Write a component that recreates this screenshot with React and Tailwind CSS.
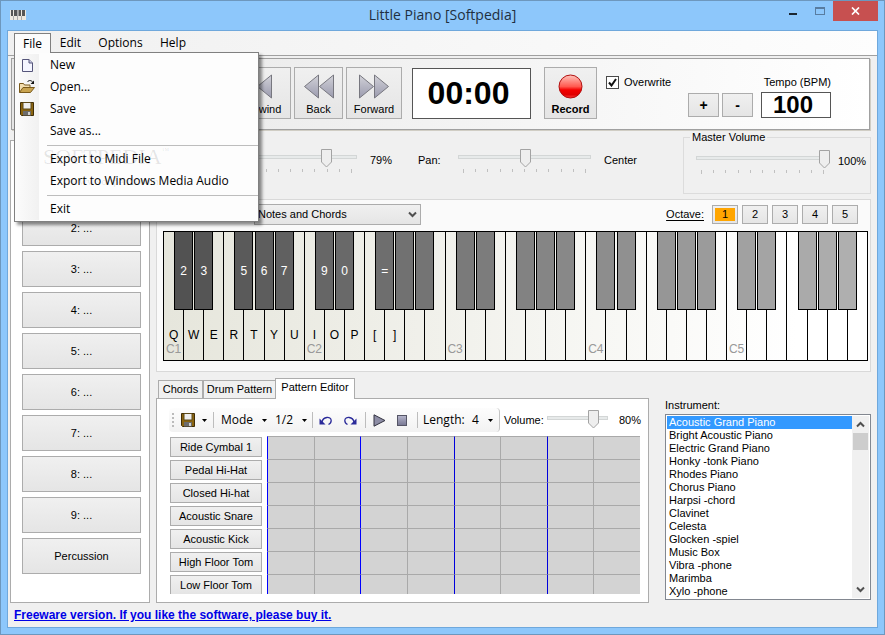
import { useState } from "react";

const instruments = [
  "Acoustic Grand Piano",
  "Bright Acoustic Piano",
  "Electric Grand Piano",
  "Honky -tonk Piano",
  "Rhodes Piano",
  "Chorus Piano",
  "Harpsi -chord",
  "Clavinet",
  "Celesta",
  "Glocken -spiel",
  "Music Box",
  "Vibra -phone",
  "Marimba",
  "Xylo -phone",
];

const drums = [
  "Ride Cymbal 1",
  "Pedal Hi-Hat",
  "Closed Hi-hat",
  "Acoustic Snare",
  "Acoustic Kick",
  "High Floor Tom",
  "Low Floor Tom",
];

const slots = ["1: ...", "2: ...", "3: ...", "4: ...", "5: ...", "6: ...", "7: ...", "8: ...", "9: ...", "Percussion"];

const whiteLabels = ["Q", "W", "E", "R", "T", "Y", "U", "I", "O", "P", "[", "]"];
const blackLabels = { 0: "2", 1: "3", 3: "5", 4: "6", 5: "7", 7: "9", 8: "0", 10: "=" };

const buttonStyle = "border border-[#acacac] bg-linear-to-b from-[#f0f0f0] to-[#e5e5e5]";
const menuFont = "font-['Open_Sans',sans-serif] text-xs";

function NewIcon() {
  return (
    <svg width="16" height="16" viewBox="0 0 16 16">
      <path d="M3.500 2.500h6.500l3.500 3.500v8.500h-10z" fill="#f4f5ff" stroke="#55557a" />
      <path d="M10 2.500v3.500h3.500" fill="#c9cbe4" stroke="#55557a" />
    </svg>
  );
}

function OpenIcon() {
  return (
    <svg width="16" height="16" viewBox="0 0 16 16">
      <path d="M.5 13.500v-9h4l1 1.500h5.500v2" fill="#f4dfb0" stroke="#7a5a1c" />
      <path d="M.5 13.500l3.500-5h11.500l-4 5z" fill="#c9a450" stroke="#7a5a1c" />
      <path d="M8.500 3c1-2 4-2 5.500.5" fill="none" stroke="#111" />
      <path d="M15 1.500v3.500h-3.500z" fill="#111" />
    </svg>
  );
}

function SaveIcon() {
  return (
    <svg width="16" height="16" viewBox="0 0 16 16">
      <path d="M1.500 1.500h13v13h-12l-1-1z" fill="#8a6410" stroke="#3f2c05" />
      <path d="M4 1.500h8v6.500H4z" fill="#efefef" stroke="#5d4a1a" />
      <path d="M4 10h8v4.500H4z" fill="#6c6c6c" />
      <path d="M9 11h2v3H9z" fill="#cfcfcf" />
    </svg>
  );
}

function Triangle({ left }) {
  return (
    <svg width="15" height="25" viewBox="0 0 15 25">
      <defs>
        <linearGradient id="tri" x1="0" y1="0" x2="0" y2="1">
          <stop offset="0" stopColor="#d2d2d8" />
          <stop offset="1" stopColor="#9a9aae" />
        </linearGradient>
      </defs>
      <path d={left ? "M14.500 1v23L.5 12.500z" : "M.5 1v23l14-11.500z"} fill="url(#tri)" stroke="#77777f" />
    </svg>
  );
}

function Caret() {
  return (
    <svg width="5" height="3" viewBox="0 0 5 3">
      <path d="M0 0h5L2.500 3z" fill="#000" />
    </svg>
  );
}

function Chevron({ up }) {
  return (
    <svg width="9" height="7" viewBox="0 0 9 7">
      <path d={up ? "M1 5.500l3.500-3.500L8 5.500" : "M1 1.500l3.500 3.500L8 1.500"} fill="none" stroke="#505050" strokeWidth="2" />
    </svg>
  );
}

function Slider({ label, initial, width, ticks }) {
  const [value, setValue] = useState(initial);
  return (
    <div className={`relative h-6 shrink-0 ${width}`}>
      <div className="absolute inset-x-0 top-[6px] h-1 border border-[#d3d6d6] bg-[#e7eaea]" />
      {ticks && (
        <div className="absolute inset-x-[5px] top-[20px] flex justify-between">
          {Array.from({ length: 11 }).map((_, i) => (
            <span key={i} className={`w-px bg-[#c0c0c0] ${i % 10 ? "h-[3px]" : "h-1"}`} />
          ))}
        </div>
      )}
      <div className="absolute inset-x-[5px] top-0">
        <svg width="11" height="19" viewBox="0 0 11 19" className="absolute -ml-[5px]" style={{ left: `${value}%` }}>
          <path d="M.5.5h10v12.500l-5 5-5-5z" fill="#eeeeee" stroke="#a3a3a3" />
        </svg>
      </div>
      <input
        type="range"
        aria-label={label}
        value={value}
        onChange={(e) => setValue(Number(e.target.value))}
        className="absolute inset-0 h-full w-full opacity-0"
      />
    </div>
  );
}

function TransportButton({ label, width, bold, children }) {
  return (
    <button className={`flex h-[52px] shrink-0 flex-col items-center justify-end pb-[3px] ${width} ${buttonStyle} ${bold ? "font-bold" : ""}`}>
      <span className="flex h-[25px]">{children}</span>
      <span className="mt-1 h-3 leading-3">{label}</span>
    </button>
  );
}

function TitleBar() {
  return (
    <header className="relative flex h-[29px] items-start">
      <svg width="16" height="10" viewBox="0 0 16 10" className="mt-[9px] ml-[9px]">
        <rect width="16" height="10" fill="#ece8df" />
        <path d="M1 0h2v6H1zM4 0h3v6H4zM8.500 0h2.500v6H8.500zM12 0h3v6h-3z" fill="#555" />
        <path d="M3.500 6v4M7.500 0v10M11.500 6v4" stroke="#aaa" />
      </svg>
      <h1 className="flex-1 pt-1 pl-[80px] text-center font-['Open_Sans',sans-serif] text-sm leading-5 text-[#1f2f40]">
        Little Piano [Softpedia]
      </h1>
      <div className="flex">
        <button aria-label="Minimize" className="flex h-5 w-[27px] items-center justify-center pt-[5px]">
          <span className="h-[2px] w-2 bg-[#1b2631]" />
        </button>
        <button aria-label="Maximize" className="flex h-5 w-[27px] items-center justify-center">
          <span className="h-2 w-[10px] border border-t-2 border-[#587ca0]" />
        </button>
        <button aria-label="Close" className="mr-[6px] flex h-5 w-[45px] items-center justify-center bg-[#c75050]">
          <svg width="9" height="8" viewBox="0 0 9 8">
            <path d="M1 .5l7 7M8 .5l-7 7" stroke="#fff" strokeWidth="1.700" />
          </svg>
        </button>
      </div>
    </header>
  );
}

function FileMenu() {
  const row = "flex h-[22px] w-full items-center text-left";
  return (
    <div className={`absolute top-[21px] left-[6px] z-30 w-[245px] border border-[#808080] bg-[#fdfdfd] py-px shadow-[3px_3px_3px_rgba(0,0,0,0.45)] ${menuFont}`}>
      <div className="bg-linear-to-r from-[#fcfcfc] to-[#f1f1f1] to-[24px]">
        <div className="ml-6 bg-[#fdfdfd]">
          {[
            ["New", <NewIcon />],
            ["Open...", <OpenIcon />],
            ["Save", <SaveIcon />],
            ["Save as...", null],
          ].map(([label, icon]) => (
            <button key={label} className={row}>
              <span className="-ml-5 w-[31px]">{icon}</span>
              {label}
            </button>
          ))}
          <div className="my-[2px] ml-2 h-[2px] border-b border-[#bdbdbd]" />
          <button className={`${row} pl-[11px]`}>Export to Midi File</button>
          <button className={`${row} pl-[11px]`}>Export to Windows Media Audio</button>
          <div className="my-[2px] ml-2 h-[2px] border-b border-[#bdbdbd]" />
          <button className={`${row} pl-[11px]`}>Exit</button>
        </div>
      </div>
      <div className="pointer-events-none absolute top-[94px] left-[28px] font-['Liberation_Serif',serif] text-black/10">
        <p className="flex items-start text-[22px] leading-5">
          SOFTPEDIA<span className="text-[8px] leading-[8px]">™</span>
        </p>
        <p className="mt-[6px] pl-7 text-[11px] leading-4">www.softpedia.com</p>
      </div>
    </div>
  );
}

function MenuBar() {
  return (
    <nav className={`relative flex h-[25px] items-start border-b border-[#a0a0a0] bg-linear-to-r from-[#f0f0f0] to-[#fdfdfd] pt-[2px] pl-[6px] ${menuFont}`}>
      <button className="relative z-40 h-5 w-[37px] border border-b-0 border-[#808080] bg-[#fcfcfc]">File</button>
      <button className="h-5 w-[39px]">Edit</button>
      <button className="h-5 w-[61px]">Options</button>
      <button className="h-5 w-[44px]">Help</button>
      <FileMenu />
    </nav>
  );
}

function Transport() {
  return (
    <section className="mt-[2px] mr-[7px] ml-[3px] flex h-[72px] items-start border border-[#a0a0a0] bg-linear-to-r from-[#e6e6e6] to-white pt-2 shadow-[1px_1px_0_#d0cdc4]">
      <div className="ml-[223px] flex gap-[3px]">
        <TransportButton label="Rewind" width="w-[56px]">
          <span className="mt-px h-[23px] w-[2px] bg-[#77777f]" />
          <Triangle left />
        </TransportButton>
        <TransportButton label="Back" width="w-[49px]">
          <Triangle left />
          <Triangle left />
        </TransportButton>
        <TransportButton label="Forward" width="w-[56px]">
          <Triangle />
          <Triangle />
        </TransportButton>
      </div>
      <output className="mt-px ml-[10px] flex h-[51px] w-[119px] shrink-0 items-center justify-center border border-[#555] bg-white pr-[6px] text-[32px] font-bold">
        00:00
      </output>
      <div className="ml-[13px]">
        <TransportButton label="Record" width="w-[53px]" bold>
          <svg width="25" height="25" viewBox="0 0 25 25">
            <defs>
              <linearGradient id="rec" x1="0" y1="0" x2="0" y2="1">
                <stop offset="0" stopColor="#ffc4bc" />
                <stop offset="0.500" stopColor="#ff5a50" />
                <stop offset="0.650" stopColor="#f40000" />
                <stop offset="0.850" stopColor="#e00000" />
                <stop offset="1" stopColor="#ff3a3a" />
              </linearGradient>
            </defs>
            <circle cx="12.500" cy="12.500" r="11.500" fill="url(#rec)" stroke="#b01010" />
          </svg>
        </TransportButton>
      </div>
      <label className="mt-[9px] ml-[9px] flex items-center gap-[5px]">
        <input
          type="checkbox"
          defaultChecked
          className="peer h-[13px] w-[13px] appearance-none border border-[#4a4a4a] bg-white"
        />
        <svg width="9" height="9" viewBox="0 0 9 9" className="pointer-events-none -ml-4 mr-[2px] hidden peer-checked:block">
          <path d="M1 4.500l2.500 3L8 1" fill="none" stroke="#111" strokeWidth="2" />
        </svg>
        Overwrite
      </label>
      <div className="mt-[26px] ml-auto flex gap-[3px] text-sm font-bold">
        <button className={`h-6 w-[31px] leading-4 ${buttonStyle}`}>+</button>
        <button className={`h-6 w-[31px] leading-4 ${buttonStyle}`}>-</button>
      </div>
      <label className="mt-[7px] mr-[38px] ml-2 flex w-[70px] flex-col items-end leading-4">
        Tempo (BPM)
        <input
          defaultValue="100"
          className="mt-[2px] h-[26px] w-[70px] border border-[#555] bg-white pr-[6px] text-center text-2xl leading-6 font-bold"
        />
      </label>
    </section>
  );
}

function MixerRow() {
  return (
    <div className="flex h-[69px] items-start">
      <span className="mt-[24px] w-[68px] shrink-0">Volume:</span>
      <div className="mt-[19px]">
        <Slider label="Volume" initial={79} width="w-[133px]" ticks />
      </div>
      <span className="mt-[24px] ml-[13px] w-12">79%</span>
      <span className="mt-[24px] w-10">Pan:</span>
      <div className="mt-[19px]">
        <Slider label="Pan" initial={50} width="w-[133px]" ticks />
      </div>
      <span className="mt-[24px] ml-[13px]">Center</span>
      <fieldset className="mt-px ml-auto h-[63px] w-[188px] border border-[#dcdcdc] pl-3">
        <legend className="-ml-[6px] px-[2px]">Master Volume</legend>
        <div className="mt-[6px] flex items-start gap-[9px]">
          <Slider label="Master Volume" initial={100} width="w-[133px]" ticks />
          <span className="mt-[5px]">100%</span>
        </div>
      </fieldset>
    </div>
  );
}

function Keyboard() {
  return (
    <div className="flex h-[130px] border border-black bg-linear-to-r from-[#e6e6dc] to-white to-90%">
      {Array.from({ length: 35 }).map((_, i) => {
        const note = i % 7;
        const hasBlack = note !== 2 && note !== 6;
        const shade = Math.round(82 + (i / 34) * 96);
        return (
          <div key={i} className={`relative flex-1 ${i ? "border-l border-black" : ""}`}>
            <button className="flex h-full w-full flex-col items-center justify-end pb-1">
              <span className="text-xs leading-[14px]">{whiteLabels[i]}</span>
              <span className="h-[14px] text-xs leading-[14px] text-[#999]">{note === 0 ? `C${i / 7 + 1}` : ""}</span>
            </button>
            {hasBlack && (
              <button
                className="absolute top-0 -right-[10px] z-10 h-[78px] w-[19px] border border-t-0 border-black text-xs text-white"
                style={{ backgroundColor: `rgb(${shade},${shade},${shade})` }}
              >
                {blackLabels[i]}
              </button>
            )}
          </div>
        );
      })}
    </div>
  );
}

function PianoPanel() {
  const [octave, setOctave] = useState(1);
  return (
    <section className="border border-[#d9d9d9] bg-[#fafafa] pr-[2px] pb-[10px] pl-[6px]">
      <div className="flex h-[31px] items-start justify-between pt-1 pl-[91px]">
        <div className="relative">
          <select aria-label="Keyboard mode" className={`h-[21px] w-[167px] appearance-none pl-[3px] ${buttonStyle}`}>
            <option>Notes and Chords</option>
          </select>
          <span className="pointer-events-none absolute top-[7px] right-1">
            <Chevron />
          </span>
        </div>
        <div className="mt-px flex items-center gap-1 pr-[10px]">
          <span className="mr-1 underline underline-offset-2">Octave:</span>
          {[1, 2, 3, 4, 5].map((n) => (
            <button key={n} onClick={() => setOctave(n)} className={`h-[19px] w-[26px] p-[2px] ${buttonStyle}`}>
              <span className={`flex h-full items-center justify-center ${octave === n ? "bg-[#ffa500]" : ""}`}>{n}</span>
            </button>
          ))}
        </div>
      </div>
      <Keyboard />
    </section>
  );
}

function PatternToolbar() {
  const sep = <span className="h-4 w-px bg-[#bdbdbd]" />;
  return (
    <div className="flex items-center">
      <div className={`flex h-6 w-[331px] shrink-0 items-center rounded border-r border-[#c4c4c4] bg-linear-to-b from-[#fdfdfd] to-[#f2f2f2] pl-[3px] ${menuFont}`}>
        <span className="h-[14px] border-l-2 border-dotted border-[#bbb]" />
        <button aria-label="Save pattern" className="ml-[6px] flex w-[33px] items-center gap-[6px]">
          <SaveIcon />
          <Caret />
        </button>
        {sep}
        <button className="flex w-[53px] items-center justify-between pl-[7px]">
          Mode <Caret />
        </button>
        <button className="flex w-[45px] items-center justify-between pr-[5px] pl-2">
          1/2 <Caret />
        </button>
        {sep}
        <button aria-label="Undo" className="ml-[6px] w-6">
          <svg width="14" height="11" viewBox="0 0 14 11">
            <path d="M3 7c1-5.500 9-6 9.200-1.500 0 2-.7 3-2.700 4" fill="none" stroke="#2b2b9a" strokeWidth="1.300" />
            <path d="M.5 3.500v6h6z" fill="#2b2b9a" />
          </svg>
        </button>
        <button aria-label="Redo" className="w-[22px]">
          <svg width="14" height="11" viewBox="0 0 14 11">
            <path d="M11 7c-1-5.500-9-6-9.200-1.500 0 2 .7 3 2.700 4" fill="none" stroke="#2b2b9a" strokeWidth="1.300" />
            <path d="M13.500 3.500v6h-6z" fill="#2b2b9a" />
          </svg>
        </button>
        {sep}
        <button aria-label="Play" className="ml-[7px] w-6">
          <svg width="13" height="13" viewBox="0 0 13 13">
            <path d="M1 .8v11.400l11-5.700z" fill="#8d8da5" stroke="#333340" />
          </svg>
        </button>
        <button aria-label="Stop" className="w-[20px]">
          <span className="block h-[11px] w-[10px] border border-[#555566] bg-linear-to-b from-[#b4b4ca] to-[#7a7a95]" />
        </button>
        {sep}
        <span className="ml-[5px] w-[49px]">Length:</span>
        <button className="flex items-center gap-[9px]">
          4 <Caret />
        </button>
      </div>
      <span className="ml-1 w-[43px] shrink-0">Volume:</span>
      <div className="-mt-px h-[19px]">
        <Slider label="Pattern volume" initial={80} width="w-[61px]" />
      </div>
      <span className="ml-[11px]">80%</span>
    </div>
  );
}

function PatternGrid() {
  // bar lines are on every second beat
  return (
    <div className="grid h-[158px] flex-1 auto-rows-[23px] grid-cols-8 overflow-hidden bg-[#d3d3d3]">
      {Array.from({ length: 56 }).map((_, i) => (
        <div
          key={i}
          className={`border-t border-l border-t-[#a9a9a9] ${
            [0, 2].includes(i % 8) ? "border-l-[#0000ff]" : [4, 6].includes(i % 8) ? "border-l-[#0000dc]" : "border-l-[#a9a9a9]"
          }`}
        />
      ))}
    </div>
  );
}

function PatternEditor() {
  const tab = "border border-b-0 border-[#acacac]";
  return (
    <section className="flex w-[493px] flex-1 flex-col">
      <div className="relative z-10 -mb-px flex items-end pl-[2px]" role="tablist">
        <button role="tab" className={`mb-px h-[18px] w-[45px] bg-[#f0f0f0] ${tab}`}>Chords</button>
        <button role="tab" className={`mb-px h-[18px] w-[73px] bg-[#f0f0f0] ${tab}`}>Drum Pattern</button>
        <button role="tab" aria-selected="true" className={`-ml-px h-[21px] w-[80px] bg-white pb-[3px] ${tab}`}>Pattern Editor</button>
      </div>
      <div className="flex-1 border border-[#acacac] bg-white pt-[9px] pr-2 pl-3">
        <PatternToolbar />
        <div className="mt-1 flex gap-[5px] pl-px">
          <div className="flex h-[158px] w-[92px] flex-col gap-[3px] overflow-hidden pt-px">
            {drums.map((name) => (
              <button key={name} className={`h-5 shrink-0 ${buttonStyle}`}>
                {name}
              </button>
            ))}
          </div>
          <PatternGrid />
        </div>
      </div>
    </section>
  );
}

function InstrumentList() {
  return (
    <div className="flex w-[206px] flex-col pt-[21px]">
      <label htmlFor="instrument" className="mb-[2px]">
        Instrument:
      </label>
      <div className="flex h-[186px] border border-[#828790] bg-white p-px">
        <select
          id="instrument"
          size={14}
          defaultValue={instruments[0]}
          className="h-full flex-1 overflow-hidden bg-white outline-none [&>option]:h-[13px] [&>option]:min-h-0 [&>option]:p-0 [&>option]:pl-[2px] [&>option]:leading-[13px] [&>option:checked]:bg-[linear-gradient(#3399ff,#3399ff)] [&>option:checked]:text-white"
        >
          {instruments.map((name) => (
            <option key={name}>{name}</option>
          ))}
        </select>
        <div className="flex w-[17px] flex-col items-center bg-[#f0f0f0]">
          <span className="flex h-[17px] items-center">
            <Chevron up />
          </span>
          <span className="h-[17px] w-[15px] bg-[#cdcdcd]" />
          <span className="mt-auto flex h-[17px] items-center">
            <Chevron />
          </span>
        </div>
      </div>
    </div>
  );
}

export default function App() {
  return (
    <div className="flex min-h-screen flex-col border border-[#6d97bd] bg-[#8dc7fb] font-['Liberation_Sans',Arial,sans-serif] text-[11px] leading-[13px] text-black">
      <TitleBar />
      <div className="mx-[6px] mb-[6px] flex flex-1 flex-col border border-[#6fa8dc] bg-[#f0f0f0]">
        <MenuBar />
        <Transport />
        <main className="flex flex-1 gap-[6px] pr-[6px] pl-[2px]">
          <aside className="mt-[10px] flex w-[140px] shrink-0 flex-col gap-[5px] border border-[#acacac] bg-white pt-7 pr-2 pl-[11px]">
            {slots.map((slot) => (
              <button key={slot} className={`h-9 ${buttonStyle}`}>
                {slot}
              </button>
            ))}
          </aside>
          <div className="flex min-w-0 flex-1 flex-col">
            <MixerRow />
            <PianoPanel />
            <div className="mt-[6px] flex flex-1 justify-between gap-4">
              <PatternEditor />
              <InstrumentList />
            </div>
          </div>
        </main>
        <footer className="px-[6px] pt-[6px] pb-[5px]">
          <a href="#buy" className="text-xs leading-[13px] font-bold text-[#0000e6] underline">
            Freeware version. If you like the software, please buy it.
          </a>
        </footer>
      </div>
    </div>
  );
}
